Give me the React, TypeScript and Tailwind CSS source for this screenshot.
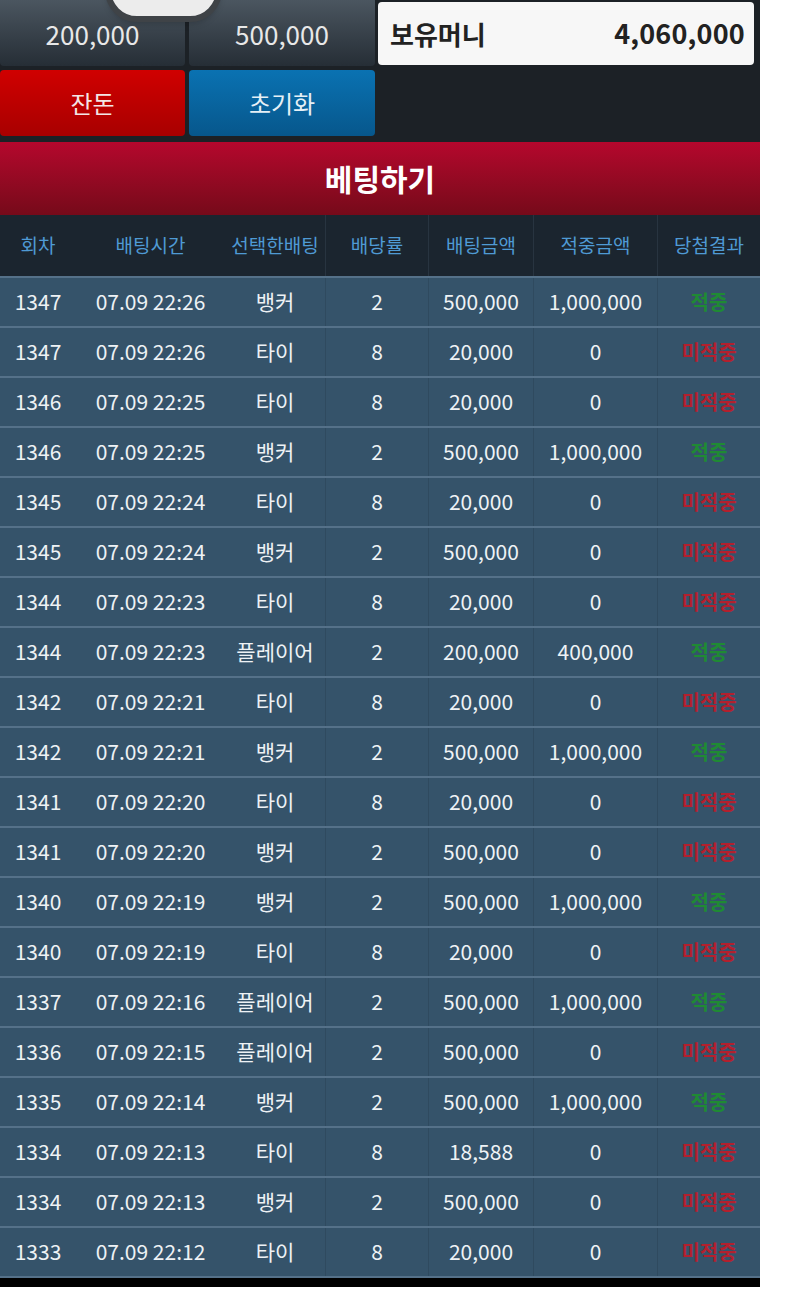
import React from 'react';

type Bet = {
  round: string;
  time: string;
  pick: string;
  odds: string;
  amount: string;
  payout: string;
  win: boolean;
};

// 회차, 시간, 선택, 배당, 배팅금액, 적중금액, 결과
const raw: [string, string, string, string, string, string, boolean][] = [
  ['1347', '07.09 22:26', '뱅커', '2', '500,000', '1,000,000', true],
  ['1347', '07.09 22:26', '타이', '8', '20,000', '0', false],
  ['1346', '07.09 22:25', '타이', '8', '20,000', '0', false],
  ['1346', '07.09 22:25', '뱅커', '2', '500,000', '1,000,000', true],
  ['1345', '07.09 22:24', '타이', '8', '20,000', '0', false],
  ['1345', '07.09 22:24', '뱅커', '2', '500,000', '0', false],
  ['1344', '07.09 22:23', '타이', '8', '20,000', '0', false],
  ['1344', '07.09 22:23', '플레이어', '2', '200,000', '400,000', true],
  ['1342', '07.09 22:21', '타이', '8', '20,000', '0', false],
  ['1342', '07.09 22:21', '뱅커', '2', '500,000', '1,000,000', true],
  ['1341', '07.09 22:20', '타이', '8', '20,000', '0', false],
  ['1341', '07.09 22:20', '뱅커', '2', '500,000', '0', false],
  ['1340', '07.09 22:19', '뱅커', '2', '500,000', '1,000,000', true],
  ['1340', '07.09 22:19', '타이', '8', '20,000', '0', false],
  ['1337', '07.09 22:16', '플레이어', '2', '500,000', '1,000,000', true],
  ['1336', '07.09 22:15', '플레이어', '2', '500,000', '0', false],
  ['1335', '07.09 22:14', '뱅커', '2', '500,000', '1,000,000', true],
  ['1334', '07.09 22:13', '타이', '8', '18,588', '0', false],
  ['1334', '07.09 22:13', '뱅커', '2', '500,000', '0', false],
  ['1333', '07.09 22:12', '타이', '8', '20,000', '0', false],
];

const bets: Bet[] = raw.map(([round, time, pick, odds, amount, payout, win]) => ({
  round,
  time,
  pick,
  odds,
  amount,
  payout,
  win,
}));

const headers = ['회차', '배팅시간', '선택한배팅', '배당률', '배팅금액', '적중금액', '당첨결과'];
const cols = 'grid grid-cols-[76px_149px_100px_103px_105px_124px_103px]';

export default function App() {
  return (
    <div
      className="min-h-[1312px] bg-white"
      style={{ fontFamily: '"Noto Sans CJK KR", "Noto Sans", sans-serif' }}
    >
      <div className="w-[760px] bg-[#1c2126]">
        {/* Top controls */}
        <div className="relative flex flex-col gap-1 pb-1.5">
          <div className="flex gap-1 h-[66px]">
            <button className="w-[185px] rounded-b bg-gradient-to-b from-[#4b5660] to-[#262e36] text-[26px] text-[#e8e8e8]">
              200,000
            </button>
            <button className="w-[186px] rounded-b bg-gradient-to-b from-[#4b5660] to-[#262e36] text-[26px] text-[#e8e8e8]">
              500,000
            </button>
            <div className="flex-1 mt-0.5 mb-px mr-1.5 ml-[-1px] flex items-center justify-between rounded bg-[#f7f7f7] pl-3 pr-[9px] text-[#222]">
              <span className="text-[26px] font-bold">보유머니</span>
              <span className="text-[27px] font-bold tracking-[0.2px]">4,060,000</span>
            </div>
          </div>
          <div className="flex gap-1 h-[66px]">
            <button className="w-[185px] rounded bg-gradient-to-b from-[#d00000] to-[#a80000] text-[24px] text-[#f3e6e6]">
              잔돈
            </button>
            <button className="w-[186px] rounded bg-gradient-to-b from-[#0a72b2] to-[#07578c] text-[24px] text-[#e6f0f6]">
              초기화
            </button>
          </div>
          {/* floating knob overlapping the top edge */}
          <div className="absolute left-[105px] top-[-42px] w-[117px] h-[64px] rounded-[32px] border-[6px] border-[#3f4347] bg-[#ececec] shadow-md" />
        </div>

        {/* Title */}
        <div className="h-[73px] flex items-center justify-center bg-gradient-to-b from-[#b5072d] to-[#760a1a]">
          <span className="text-[30px] font-bold text-white">베팅하기</span>
        </div>

        {/* Table header */}
        <div className={`${cols} h-[61px] bg-[#1b252f]`}>
          {headers.map((h, i) => (
            <div
              key={h}
              className={`flex items-center justify-center text-[19px] text-[#4f9ad4] ${
                i >= 3 ? 'border-l border-[#283440]' : ''
              }`}
            >
              {h}
            </div>
          ))}
        </div>

        {/* Rows */}
        <div>
          {bets.map((b, idx) => (
            <div
              key={idx}
              className={`${cols} h-[50px] bg-[#35536a] border-t-2 border-[#557189] text-[21px] text-[#eef2f5]`}
            >
              <div className="flex items-center justify-center">{b.round}</div>
              <div className="flex items-center justify-center">{b.time}</div>
              <div className="flex items-center justify-center">{b.pick}</div>
              <div className="flex items-center justify-center border-l border-[#2f4a5f]">{b.odds}</div>
              <div className="flex items-center justify-center border-l border-[#2f4a5f]">{b.amount}</div>
              <div className="flex items-center justify-center border-l border-[#2f4a5f]">{b.payout}</div>
              <div
                className={`flex items-center justify-center border-l border-[#2f4a5f] text-[20px] font-bold ${
                  b.win ? 'text-[#1f8a34]' : 'text-[#b3202e]'
                }`}
              >
                {b.win ? '적중' : '미적중'}
              </div>
            </div>
          ))}
        </div>

        <div className="h-[11px] bg-black border-t-2 border-[#557189]" />
      </div>
    </div>
  );
}
